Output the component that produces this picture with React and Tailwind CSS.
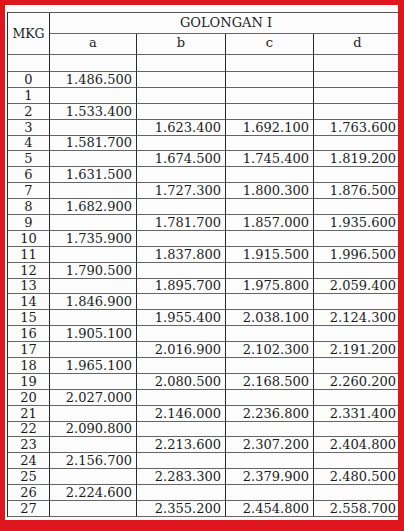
import React from 'react';

// gaji pokok golongan I, per MKG (masa kerja golongan)
const golA = {
  0: '1.486.500', 2: '1.533.400', 4: '1.581.700', 6: '1.631.500', 8: '1.682.900',
  10: '1.735.900', 12: '1.790.500', 14: '1.846.900', 16: '1.905.100', 18: '1.965.100',
  20: '2.027.000', 22: '2.090.800', 24: '2.156.700', 26: '2.224.600',
};

const golBCD = {
  3: ['1.623.400', '1.692.100', '1.763.600'],
  5: ['1.674.500', '1.745.400', '1.819.200'],
  7: ['1.727.300', '1.800.300', '1.876.500'],
  9: ['1.781.700', '1.857.000', '1.935.600'],
  11: ['1.837.800', '1.915.500', '1.996.500'],
  13: ['1.895.700', '1.975.800', '2.059.400'],
  15: ['1.955.400', '2.038.100', '2.124.300'],
  17: ['2.016.900', '2.102.300', '2.191.200'],
  19: ['2.080.500', '2.168.500', '2.260.200'],
  21: ['2.146.000', '2.236.800', '2.331.400'],
  23: ['2.213.600', '2.307.200', '2.404.800'],
  25: ['2.283.300', '2.379.900', '2.480.500'],
  27: ['2.355.200', '2.454.800', '2.558.700'],
};

const rows = Array.from({ length: 28 }, (_, i) => i);

const cell = 'border-r-[1.5px] border-b border-r-[#2a2a2a] border-b-[#666]';
const valCell = `${cell} flex items-end justify-end pr-[4px] text-[13px] leading-[15px]`;
const lastCell = 'border-b border-b-[#666] flex items-end justify-end pr-[8px] text-[13px] leading-[15px]';

const App = () => {
  return (
    <div className="w-[404px] h-[531px] bg-[#e0161e] pt-[5px] pl-[5px] pr-[6px] pb-[11px]">
      <div
        className="w-full h-full bg-[#fcfcfc] overflow-hidden pt-[7px] pl-[2px] text-[#1c1c1c]"
        style={{ fontFamily: '"DejaVu Serif", "Liberation Serif", serif' }}
      >
        <div className="grid w-max grid-cols-[42px_87px_89px_88px_90px] grid-rows-[21px_21px_17px_repeat(28,15.9px)] border-l-[1.5px] border-t border-l-[#2a2a2a] border-t-[#555]">
          {/* Header */}
          <div className={`${cell} row-span-2 flex items-center justify-center text-[12.5px] pt-[2px]`}>MKG</div>
          <div className="border-b border-b-[#666] col-span-4 flex items-center justify-center text-[13px] pb-[1px] pr-[2px]">GOLONGAN I</div>
          <div className={`${cell} flex items-center justify-center text-[13px] pb-[2px]`}>a</div>
          <div className={`${cell} flex items-center justify-center text-[13px] pb-[2px]`}>b</div>
          <div className={`${cell} flex items-center justify-center text-[13px] pb-[2px]`}>c</div>
          <div className="border-b border-b-[#666] flex items-center justify-center text-[13px] pb-[2px] pr-[3px]">d</div>

          {/* Empty row */}
          <div className={cell} />
          <div className={cell} />
          <div className={cell} />
          <div className={cell} />
          <div className="border-b border-b-[#666]" />

          {rows.map((mkg) => (
            <React.Fragment key={mkg}>
              <div className={`${cell} flex items-end justify-center text-[13px] leading-[15px]`}>{mkg}</div>
              <div className={valCell}>{golA[mkg] || ''}</div>
              <div className={valCell}>{golBCD[mkg]?.[0] || ''}</div>
              <div className={valCell}>{golBCD[mkg]?.[1] || ''}</div>
              <div className={lastCell}>{golBCD[mkg]?.[2] || ''}</div>
            </React.Fragment>
          ))}
        </div>
      </div>
    </div>
  );
};

export default App;
